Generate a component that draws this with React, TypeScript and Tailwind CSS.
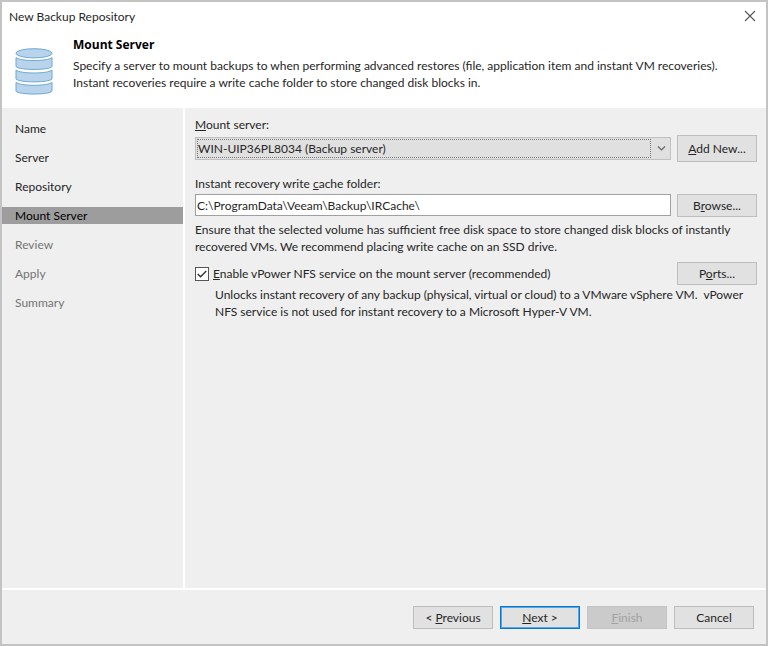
import React from 'react';
import clsx from 'clsx';

const steps = [
  { name: 'Name', state: 'done' },
  { name: 'Server', state: 'done' },
  { name: 'Repository', state: 'done' },
  { name: 'Mount Server', state: 'current' },
  { name: 'Review', state: 'pending' },
  { name: 'Apply', state: 'pending' },
  { name: 'Summary', state: 'pending' },
];

const DatabaseIcon = () => (
  <svg
    width="38"
    height="47"
    viewBox="0 0 38 47"
    fill="#b9d3ec"
    stroke="#6cabd0"
    aria-hidden="true"
  >
    <ellipse cx="19" cy="5.3" rx="18" ry="4.6" />
    <path d="M1 9.5C5 13.5 33 13.5 37 9.5V18.6C34 22.4 4 22.4 1 18.6Z" />
    <path d="M1 22C5 26 33 26 37 22V31C34 34.8 4 34.8 1 31Z" />
    <path d="M1 34.3C5 38.3 33 38.3 37 34.3V43.2C34 47 4 47 1 43.2Z" />
  </svg>
);

type ButtonProps = React.ButtonHTMLAttributes<HTMLButtonElement>;

const Button = ({ className, children, ...rest }: ButtonProps) => (
  <button
    type="button"
    className={clsx(
      'w-20 shrink-0 border disabled:border-[#c4c4c4] disabled:bg-[#cbcbcb] disabled:text-[#a2a2a2]',
      className
    )}
    {...rest}
  >
    {children}
  </button>
);

const App = () => {
  return (
    <div className="flex flex-col min-h-screen border-2 border-[#c3c3c3] bg-[#efefef] font-['Lato','Noto_Sans',sans-serif] text-[12px] leading-[17px] text-[#262626]">
      <header className="pb-[13px] bg-white">
        <div className="flex items-center justify-between h-7 pl-[7px] pr-[10px]">
          <h1>New Backup Repository</h1>
          <button type="button" aria-label="Close">
            <svg width="12" height="12" viewBox="0 0 12 12" stroke="#555555" strokeWidth="1.1">
              <path d="M1 1L11 11M11 1L1 11" />
            </svg>
          </button>
        </div>
        <div className="flex gap-5 px-[13px] pt-[6px]">
          <div className="pt-3">
            <DatabaseIcon />
          </div>
          <div>
            <h2 className="mb-1 font-['Open_Sans','Noto_Sans',sans-serif] font-bold text-black">
              Mount Server
            </h2>
            <p>
              Specify a server to mount backups to when performing advanced
              restores (file, application item and instant VM recoveries).
              <br />
              Instant recoveries require a write cache folder to store changed
              disk blocks in.
            </p>
          </div>
        </div>
      </header>

      <div className="flex grow">
        <nav className="w-[183px] shrink-0 border-r-2 border-white pt-3">
          <ol className="flex flex-col gap-3">
            {steps.map((step) => (
              <li
                key={step.name}
                aria-current={step.state === 'current' ? 'step' : undefined}
                className={clsx(
                  'px-[13px]',
                  step.state === 'current' && 'bg-[#9d9d9d] text-black',
                  step.state === 'pending' && 'text-[#747474]'
                )}
              >
                {step.name}
              </li>
            ))}
          </ol>
        </nav>

        <main className="grow pl-[10px] pr-[9px] pt-2">
          <label htmlFor="server" className="block">
            <u>M</u>ount server:
          </label>
          <div className="flex items-center gap-[6px] mt-[2px]">
            <div className="relative grow">
              <select
                id="server"
                className="block w-full h-[23px] pl-[2px] pr-6 appearance-none border border-[#c0c0c0] bg-[#e0e0e0] outline-none"
              >
                <option>WIN-UIP36PL8034 (Backup server)</option>
              </select>
              <span className="absolute inset-y-[2px] left-[2px] right-5 border border-dotted border-[#777777] pointer-events-none" />
              <svg
                className="absolute right-[5px] top-2 pointer-events-none"
                width="9"
                height="7"
                viewBox="0 0 9 7"
                fill="none"
                stroke="#666666"
                strokeWidth="1.2"
              >
                <path d="M1 1.5L4.5 5L8 1.5" />
              </svg>
            </div>
            <Button className="h-[27px] border-[#bebebe] bg-[#e1e1e1]">
              <u>A</u>dd New...
            </Button>
          </div>

          <label htmlFor="folder" className="block mt-[13px]">
            Instant recovery write <u>c</u>ache folder:
          </label>
          <div className="flex gap-[6px] mt-[2px]">
            <input
              id="folder"
              type="text"
              defaultValue="C:\ProgramData\Veeam\Backup\IRCache\"
              className="grow h-[22px] px-px border border-[#a0a0a0] bg-white outline-none"
            />
            <Button className="h-[23px] border-[#bebebe] bg-[#e1e1e1]">
              B<u>r</u>owse...
            </Button>
          </div>
          <p className="mt-1">
            Ensure that the selected volume has sufficient free disk space to
            store changed disk blocks of instantly
            <br />
            recovered VMs. We recommend placing write cache on an SSD drive.
          </p>

          <div className="flex items-center justify-between mt-[7px]">
            <label className="flex items-center gap-1">
              <span className="relative flex">
                <input
                  type="checkbox"
                  defaultChecked
                  className="peer size-[14px] appearance-none border border-[#555555] bg-white"
                />
                <svg
                  className="absolute inset-0 hidden pointer-events-none peer-checked:block"
                  width="14"
                  height="14"
                  viewBox="0 0 14 14"
                  fill="none"
                  stroke="#333333"
                  strokeWidth="1.4"
                >
                  <path d="M2.7 6.9L5.6 9.8L11.3 4.1" />
                </svg>
              </span>
              <span>
                <u>E</u>nable vPower NFS service on the mount server
                (recommended)
              </span>
            </label>
            <Button className="h-[23px] border-[#bebebe] bg-[#e1e1e1]">
              P<u>o</u>rts...
            </Button>
          </div>
          <p className="pl-5 mt-px">
            Unlocks instant recovery of any backup (physical, virtual or cloud)
            to a VMware vSphere VM.&nbsp; vPower
            <br />
            NFS service is not used for instant recovery to a Microsoft Hyper-V
            VM.
          </p>
        </main>
      </div>

      <footer className="flex justify-end gap-[7px] border-t-2 border-white px-3 pt-4 pb-[15px]">
        <Button className="h-[23px] border-[#bebebe] bg-[#e1e1e1]">
          &lt; <u>P</u>revious
        </Button>
        <Button className="h-[23px] border-[#0078d7] bg-[#e1e1e1] outline -outline-offset-2 outline-[#5aa5e0]">
          <u>N</u>ext &gt;
        </Button>
        <Button className="h-[23px]" disabled>
          <u>F</u>inish
        </Button>
        <Button className="h-[23px] border-[#bebebe] bg-[#e1e1e1]">
          Cancel
        </Button>
      </footer>
    </div>
  );
};

export default App;
